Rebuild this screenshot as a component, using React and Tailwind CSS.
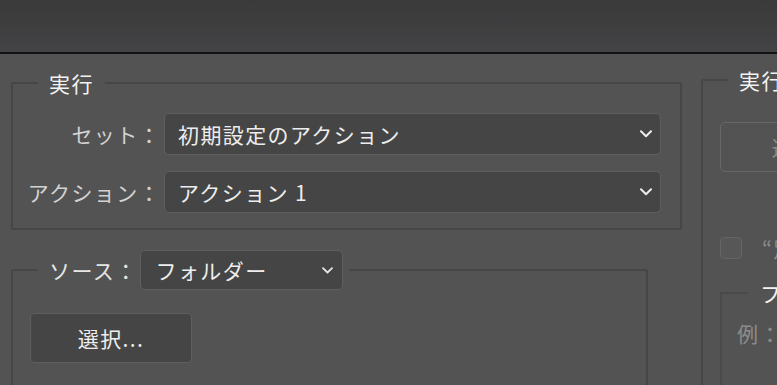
import React from 'react';

const Chevron = ({ small }) =>
  small ? (
    <svg width="11" height="7" viewBox="0 0 11 7" className="shrink-0">
      <path d="M1 1.2 L5.5 5.5 L10 1.2" fill="none" stroke="#e6e6e6" strokeWidth="1.8" strokeLinecap="round" strokeLinejoin="round" />
    </svg>
  ) : (
    <svg width="12" height="8" viewBox="0 0 12 8" className="shrink-0">
      <path d="M1 1.3 L6 6.3 L11 1.3" fill="none" stroke="#ececec" strokeWidth="2" strokeLinecap="round" strokeLinejoin="round" />
    </svg>
  );

function Select({ value, className, small }) {
  return (
    <div className={`flex items-center justify-between rounded-[5px] border border-[#5f5f5f] bg-[#454545] text-[#ededed] ${className}`}>
      <span>{value}</span>
      <Chevron small={small} />
    </div>
  );
}

function Row({ label, value, className }) {
  return (
    <div className={`flex items-center ${className}`}>
      <span className="w-[148px] text-right text-[#d2d2d2]">{label}</span>
      <Select value={value} className="ml-[3px] h-[42px] flex-1 pl-[13px] pr-[8px]" />
    </div>
  );
}

export default function App() {
  return (
    <div className="h-[385px] w-[777px] overflow-hidden bg-[#535353] font-['Noto_Sans_CJK_JP','Noto_Sans',sans-serif] text-[21px] leading-[24px] tracking-[1.4px]">
      <div className="h-[52px] bg-gradient-to-b from-[#3a3a3b] to-[#434345]" />
      <div className="h-[2px] bg-[#121212]" />

      <div className="flex items-start">
        <div className="shrink-0">
          <fieldset className="ml-[11px] mt-[17px] w-[671px] rounded-[2px] border-2 border-[#464646] pb-[15px] pr-[19px]">
            <legend className="ml-[25px] px-[11px] text-[#f2f2f2]">実行</legend>
            <Row label="セット：" value="初期設定のアクション" className="mt-[18px]" />
            <Row label="アクション：" value="アクション 1" className="mt-[16px]" />
          </fieldset>

          <fieldset className="ml-[11px] mt-[20px] h-[200px] w-[637px] rounded-[2px] border-2 border-[#464646] pl-[17px] pt-[23px]">
            <legend className="ml-[8px] pl-[11px] pr-[6px]">
              <div className="flex items-center">
                <span className="text-[#e6e6e6]">ソース：</span>
                <Select value="フォルダー" small className="ml-[2px] h-[40px] w-[203px] pl-[15px] pr-[9px]" />
              </div>
            </legend>
            <button className="flex h-[50px] w-[162px] items-center justify-center rounded-[5px] border border-[#5f5f5f] bg-[#454545] text-[#ededed]">
              選択...
            </button>
          </fieldset>
        </div>

        <fieldset className="ml-[19px] mt-[14px] h-[330px] w-[320px] shrink-0 rounded-[2px] border-2 border-[#464646] pl-[17px] pt-[30px]">
          <legend className="ml-[8px] px-[11px] text-[#f2f2f2]">実行後</legend>
          <button className="flex h-[50px] w-[170px] items-center justify-center rounded-[5px] border border-[#676767] text-[#8a8a8a]">
            選択...
          </button>
          <div className="mt-[64px] flex items-center">
            <span className="h-[22px] w-[22px] rounded-[4px] border border-[#646464] bg-[#575757]" />
            <span className="ml-[20px] whitespace-nowrap text-[#8c8c8c]">“別名で保存”コマンドを無視</span>
          </div>
          <fieldset className="mt-[21px] h-[120px] w-[280px] border-2 border-[#4a4a4a] pl-[15px] pt-[16px]">
            <legend className="ml-[11px] px-[12px] text-[#f2f2f2]">ファイル名</legend>
            <span className="whitespace-nowrap text-[#8c8c8c]">例：MyFile.gif</span>
          </fieldset>
        </fieldset>
      </div>
    </div>
  );
}
